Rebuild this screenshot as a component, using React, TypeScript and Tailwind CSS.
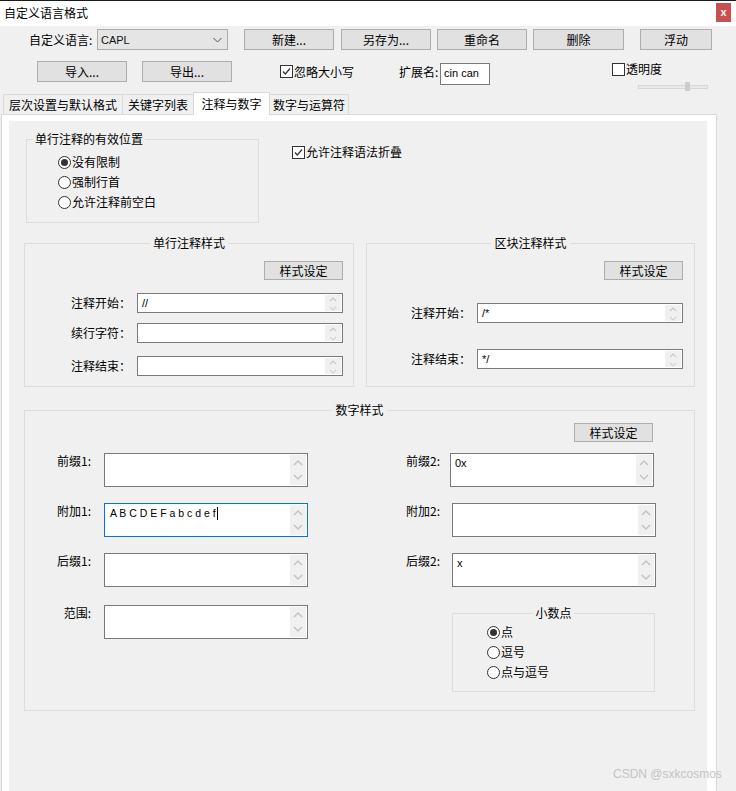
import React from 'react'

const latin = "font-['Liberation_Sans',sans-serif]"

function Btn({
  children,
  h = 'h-[21px]',
  className = '',
}: {
  children: React.ReactNode
  h?: string
  className?: string
}) {
  return (
    <div
      className={`flex ${h} shrink-0 items-center justify-center border border-[#adadad] bg-[#e1e1e1] text-[12px] leading-none text-black ${className}`}
    >
      {children}
    </div>
  )
}

function Check({ checked, label, className = '' }: { checked?: boolean; label: string; className?: string }) {
  return (
    <div className={`flex shrink-0 items-center text-[12px] leading-[14px] ${className}`}>
      <span className="flex h-[13px] w-[13px] items-center justify-center border border-[#333] bg-white">
        {checked && (
          <svg width="11" height="11" viewBox="0 0 11 11">
            <path d="M2 5.5 L4.3 8 L9 2.5" fill="none" stroke="#333" strokeWidth="1.2" />
          </svg>
        )}
      </span>
      <span className="ml-[1px]">{label}</span>
    </div>
  )
}

function Radio({ checked, label }: { checked?: boolean; label: string }) {
  return (
    <div className="flex h-[20px] items-center text-[12px] leading-[14px]">
      <span className="flex h-[13px] w-[13px] items-center justify-center rounded-full border border-[#333] bg-white">
        {checked && <span className="h-[7px] w-[7px] rounded-full bg-[#333]" />}
      </span>
      <span className="ml-[1px]">{label}</span>
    </div>
  )
}

function Spin({ tall }: { tall?: boolean }) {
  if (tall) {
    return (
      <div className="my-[1px] mr-[1px] flex w-[16px] shrink-0 items-center justify-center bg-[#f0f0f0]">
        <svg width="16" height="30" viewBox="0 0 16 30">
          <path d="M4 10 L8 6 L12 10" fill="none" stroke="#c2c2c2" strokeWidth="1.4" />
          <path d="M4 20 L8 24 L12 20" fill="none" stroke="#c2c2c2" strokeWidth="1.4" />
        </svg>
      </div>
    )
  }
  return (
    <div className="my-[1px] mr-[1px] flex w-[16px] shrink-0 items-center justify-center bg-[#f0f0f0]">
      <svg width="16" height="16" viewBox="0 0 16 16">
        <path d="M5 6 L8 3 L11 6" fill="none" stroke="#c8c8c8" strokeWidth="1.2" />
        <path d="M5 12 L8 15 L11 12" fill="none" stroke="#d4d4d4" strokeWidth="1.2" />
      </svg>
    </div>
  )
}

function Field({
  value,
  tall,
  focus,
  className = '',
}: {
  value?: React.ReactNode
  tall?: boolean
  focus?: boolean
  className?: string
}) {
  return (
    <div
      className={`flex shrink-0 border bg-white ${focus ? 'border-[#0078d7]' : 'border-[#7a7a7a]'} ${
        tall ? 'h-[34px] w-[204px]' : 'h-[20px] w-[206px]'
      } ${className}`}
    >
      <div className={`flex-1 pl-[4px] text-[11px] ${latin} ${tall ? 'pt-[3px] leading-[13px]' : 'leading-[18px]'}`}>
        {value}
      </div>
      <Spin tall={tall} />
    </div>
  )
}

function LineRow({ label, lw, value, className = '' }: { label: string; lw: string; value?: string; className?: string }) {
  return (
    <div className={`flex items-center ${className}`}>
      <span className={`${lw} shrink-0 text-right`}>{label}</span>
      <Field value={value} className="ml-[6px]" />
    </div>
  )
}

function NumRow({
  label,
  lw,
  gap,
  value,
  focus,
  className = '',
}: {
  label: string
  lw: string
  gap: string
  value?: React.ReactNode
  focus?: boolean
  className?: string
}) {
  return (
    <div className={`flex items-start ${className}`}>
      <span className={`${lw} shrink-0 pt-[1px] text-right`}>{label}</span>
      <Field tall value={value} focus={focus} className={gap} />
    </div>
  )
}

function Tab({ children, className = '', active }: { children: React.ReactNode; className?: string; active?: boolean }) {
  return (
    <div
      className={`flex shrink-0 items-center justify-center border border-b-0 border-[#d9d9d9] ${
        active ? '-mb-px h-[23px] bg-white' : 'h-[20px] bg-[#f0f0f0]'
      } ${className}`}
    >
      {children}
    </div>
  )
}

export default function App() {
  return (
    <div className="relative h-[791px] w-[736px] overflow-hidden bg-[#f0f0f0] font-['Noto_Sans_CJK_SC','Noto_Sans',sans-serif] text-black">
      {/* title bar */}
      <div className="flex h-[26px] items-start justify-between border-t border-[#1a1a1a] bg-white">
        <span className="ml-[4px] mt-[5px] text-[12px] leading-[14px]">自定义语言格式</span>
        <span className={`mr-[5px] mt-[2px] flex h-[19px] w-[15px] items-center justify-center bg-[#c75050] text-[11px] font-bold leading-none text-white ${latin}`}>
          x
        </span>
      </div>

      {/* row 1 */}
      <div className="mt-[3px] flex h-[21px] items-center text-[12px] leading-[14px]">
        <span className="ml-[29px] w-[66px] shrink-0">自定义语言:</span>
        <div className="ml-[2px] flex h-[21px] w-[131px] shrink-0 items-center justify-between border border-[#acacac] bg-[#e5e5e5] pl-[3px] pr-[5px]">
          <span className={`text-[11px] text-[#111] ${latin}`}>CAPL</span>
          <svg width="9" height="6" viewBox="0 0 9 6">
            <path d="M0.5 1 L4.5 5 L8.5 1" fill="none" stroke="#555" strokeWidth="1" />
          </svg>
        </div>
        <Btn className="ml-[16px] w-[90px]">新建...</Btn>
        <Btn className="ml-[7px] w-[90px]">另存为...</Btn>
        <Btn className="ml-[6px] w-[90px]">重命名</Btn>
        <Btn className="ml-[6px] w-[91px]">删除</Btn>
        <Btn className="ml-[16px] w-[72px]">浮动</Btn>
      </div>

      {/* row 2 */}
      <div className="mt-[11px] flex h-[21px] items-center text-[12px] leading-[14px]">
        <Btn className="ml-[37px] w-[90px]">导入...</Btn>
        <Btn className="ml-[15px] w-[90px]">导出...</Btn>
        <Check checked label="忽略大小写" className="ml-[48px]" />
        <span className="ml-[45px] mt-[4px] w-[40px] shrink-0 self-start">扩展名:</span>
        <div className={`ml-[1px] mt-[2px] h-[22px] w-[50px] shrink-0 self-start border border-[#7a7a7a] bg-white pl-[3px] text-[11px] leading-[19px] ${latin}`}>
          cin can
        </div>
        <div className="ml-[122px] mt-[1px] flex shrink-0 flex-col self-start">
          <Check label="透明度" />
          <div className="relative ml-[26px] mt-[6px] flex h-[9px] w-[70px] items-center">
            <div className="h-[4px] w-[70px] border border-[#d6d6d6] bg-[#e7eaea]" />
            <div className="absolute left-[47px] top-0 h-[9px] w-[5px] bg-[#cdcdcd]" />
          </div>
        </div>
      </div>

      {/* tabs */}
      <div className="relative z-10 mt-[10px] flex items-end pl-[3px] text-[12px] leading-[14px]">
        <Tab className="w-[120px]">层次设置与默认格式</Tab>
        <Tab className="-ml-px w-[72px]">关键字列表</Tab>
        <Tab active className="-ml-px w-[77px]">
          注释与数字
        </Tab>
        <Tab className="-ml-px w-[80px]">数字与运算符</Tab>
      </div>

      {/* tab panel */}
      <div className="ml-[1px] w-[716px] border border-[#d9d9d9] bg-white pl-[7px] pr-[9px] pt-[6px]">
        <div className="h-[680px] bg-[#f0f0f0] text-[12px] leading-[14px]">
          {/* single-line comment position */}
          <div className="flex items-start">
            <fieldset className="ml-[17px] mt-[12px] h-[90px] w-[233px] shrink-0 border border-[#dcdcdc]">
              <legend className="ml-[6px] px-[2px] leading-[12px]">单行注释的有效位置</legend>
              <div className="mt-[7px] pl-[31px]">
                <Radio checked label="没有限制" />
                <Radio label="强制行首" />
                <Radio label="允许注释前空白" />
              </div>
            </fieldset>
            <Check checked label="允许注释语法折叠" className="ml-[33px] mt-[24px]" />
          </div>

          {/* comment styles */}
          <div className="ml-[15px] mt-[14px] flex gap-[12px]">
            <fieldset className="h-[150px] w-[330px] shrink-0 border border-[#dcdcdc]">
              <legend className="mx-auto px-[3px] leading-[12px]">单行注释样式</legend>
              <div className="mt-[12px] flex justify-end pr-[10px]">
                <Btn h="h-[19px]" className="w-[79px]">
                  样式设定
                </Btn>
              </div>
              <LineRow label="注释开始：" lw="w-[106px]" value="//" className="mt-[13px]" />
              <LineRow label="续行字符：" lw="w-[106px]" className="mt-[10px]" />
              <LineRow label="注释结束：" lw="w-[106px]" className="mt-[13px]" />
            </fieldset>
            <fieldset className="h-[150px] w-[329px] shrink-0 border border-[#dcdcdc]">
              <legend className="mx-auto px-[3px] leading-[12px]">区块注释样式</legend>
              <div className="mt-[12px] flex justify-end pr-[11px]">
                <Btn h="h-[19px]" className="w-[79px]">
                  样式设定
                </Btn>
              </div>
              <LineRow label="注释开始：" lw="w-[104px]" value="/*" className="mt-[23px]" />
              <LineRow label="注释结束：" lw="w-[104px]" value="*/" className="mt-[26px]" />
            </fieldset>
          </div>

          {/* number style */}
          <fieldset className="ml-[15px] mt-[17px] h-[307px] w-[671px] border border-[#dcdcdc]">
            <legend className="mx-auto px-[3px] leading-[12px]">数字样式</legend>
            <div className="mt-[7px] flex justify-end pr-[41px]">
              <Btn h="h-[19px]" className="w-[79px]">
                样式设定
              </Btn>
            </div>
            <div className="mt-[11px] flex items-start">
              <div className="flex shrink-0 flex-col">
                <NumRow label="前缀1:" lw="w-[66px]" gap="ml-[13px]" />
                <NumRow
                  label="附加1:"
                  lw="w-[66px]"
                  gap="ml-[13px]"
                  focus
                  className="mt-[16px]"
                  value={
                    <span className="flex items-center">
                      <span className="pl-[1px] text-[10.5px]">A B C D E F a b c d e f</span>
                      <span className="ml-[1px] h-[13px] w-px bg-black" />
                    </span>
                  }
                />
                <NumRow label="后缀1:" lw="w-[66px]" gap="ml-[13px]" className="mt-[16px]" />
                <NumRow label="范围:" lw="w-[66px]" gap="ml-[13px]" className="mt-[18px]" />
              </div>
              <div className="ml-[12px] flex shrink-0 flex-col">
                <NumRow label="前缀2:" lw="w-[120px]" gap="ml-[10px]" value="0x" />
                <NumRow label="附加2:" lw="w-[120px]" gap="ml-[12px]" className="mt-[16px]" />
                <NumRow label="后缀2:" lw="w-[120px]" gap="ml-[12px]" value="x" className="mt-[16px]" />
                <fieldset className="ml-[132px] mt-[20px] h-[85px] w-[203px] border border-[#dcdcdc]">
                  <legend className="mx-auto px-[2px] leading-[12px]">小数点</legend>
                  <div className="mt-[3px] pl-[34px]">
                    <Radio checked label="点" />
                    <Radio label="逗号" />
                    <Radio label="点与逗号" />
                  </div>
                </fieldset>
              </div>
            </div>
          </fieldset>
        </div>
      </div>

      <span className={`absolute left-[613px] top-[766px] text-[12px] leading-[16px] text-[#c4c4c4] ${latin}`}>
        CSDN @sxkcosmos
      </span>
    </div>
  )
}
